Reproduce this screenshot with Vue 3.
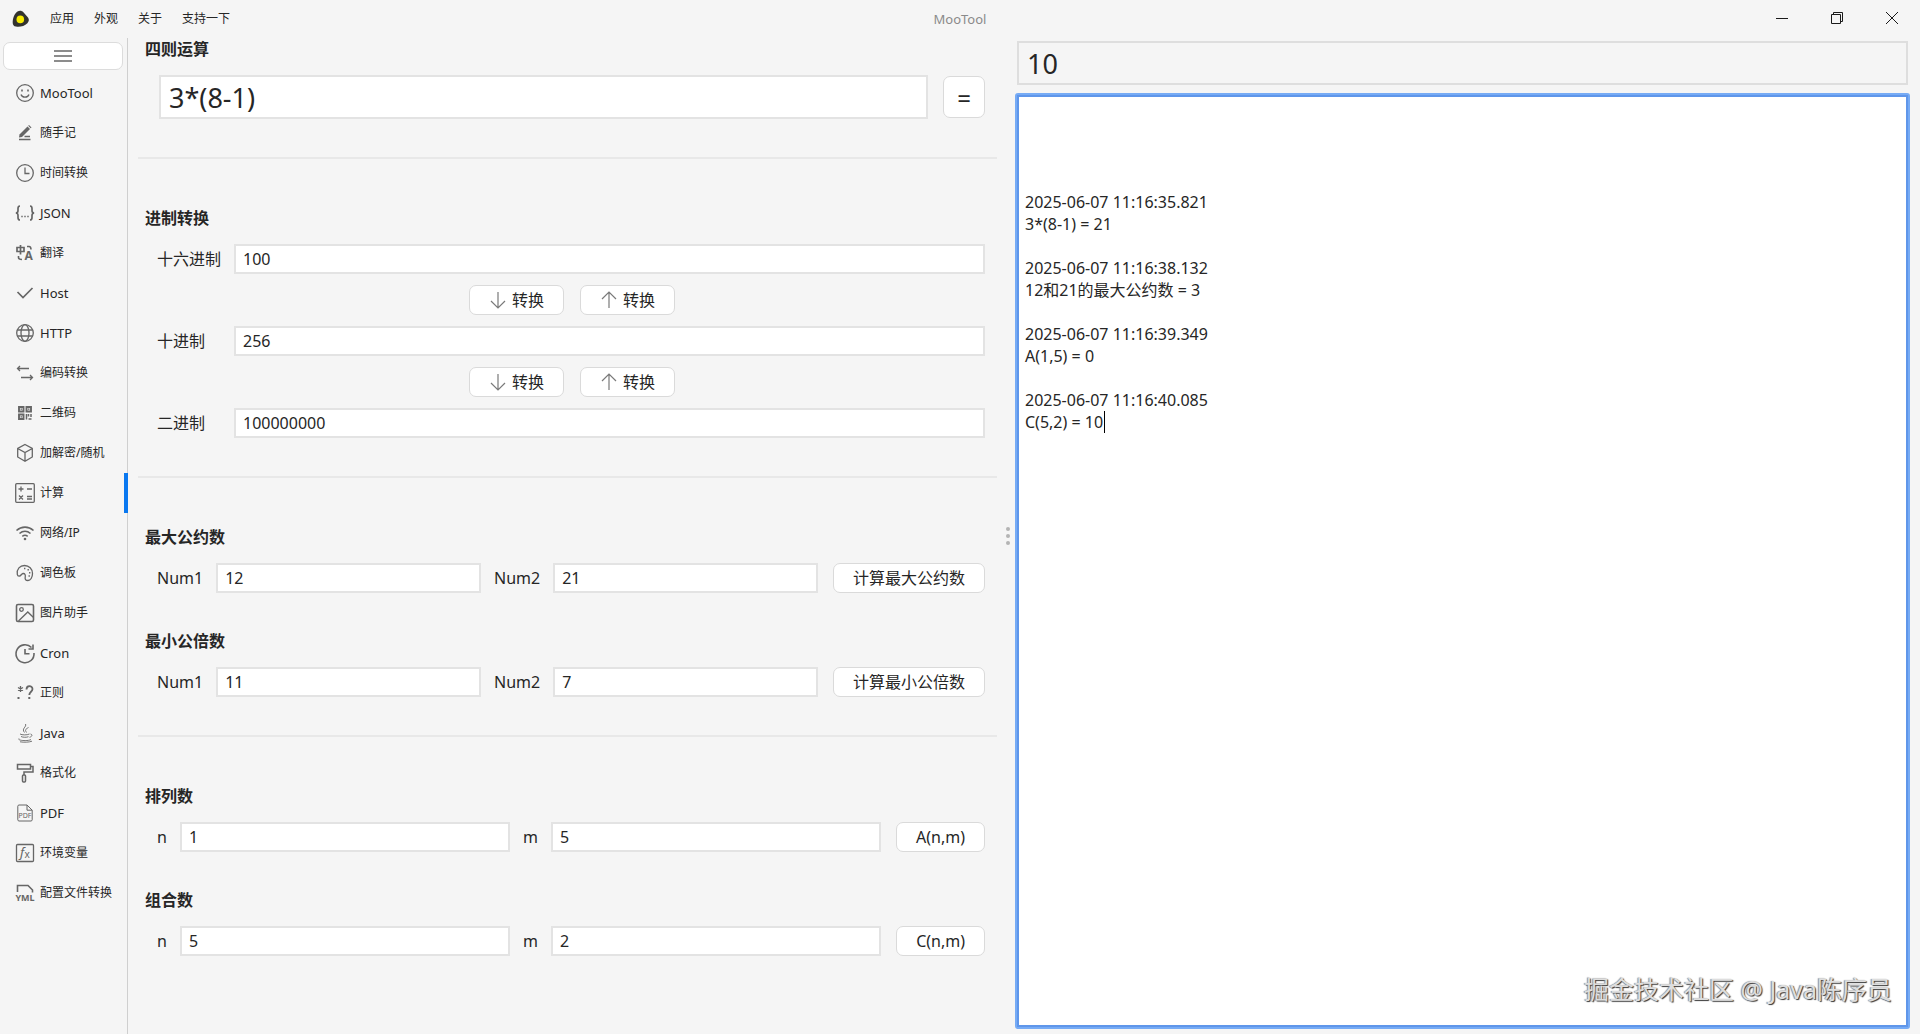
<template>
    <div class="app">
        <header class="titlebar">
            <nav class="menu">
                <svg class="logo" width="18" height="18" viewBox="0 0 18 18" aria-hidden="true">
                    <path d="M5.5 1.5C7.5.2 10 .6 11.400 2.200L16 7.600C17.400 9.400 17 11.600 15.400 13.200C12.500 16 8 17.300 4 16.600C1.800 16.200.6 14.600.7 12.400C.8 8.500 2 4 5.500 1.500Z" fill="#33332e" />
                    <circle cx="8.300" cy="9.400" r="3.800" fill="#f8ec00" />
                </svg>
                <button v-for="item in menus" :key="item" type="button" class="menu-item">{{ item }}</button>
            </nav>
            <span class="title">MooTool</span>
            <div class="window-actions">
                <button type="button" aria-label="最小化">
                    <svg width="12" height="12" viewBox="0 0 12 12"><path d="M0 6.500H12" /></svg>
                </button>
                <button type="button" aria-label="还原">
                    <svg width="12" height="12" viewBox="0 0 12 12"><path d="M.5 2.500H9.500V11.500H.5ZM2.500 2.500V.5H11.500V9.500H9.500" /></svg>
                </button>
                <button type="button" aria-label="关闭">
                    <svg width="12" height="12" viewBox="0 0 12 12"><path d="M0 0L12 12M12 0L0 12" /></svg>
                </button>
            </div>
        </header>

        <div class="body">
            <aside class="sidebar">
                <button type="button" class="collapse" aria-label="折叠">
                    <svg width="18" height="14" viewBox="0 0 18 14"><path d="M0 2H18M0 7H18M0 12H18" /></svg>
                </button>
                <button v-for="tool in tools" :key="tool.name" type="button" class="tool"
                    :class="{ 'active': tool.name === activeTool, 'latin': tool.latin }" @click="activeTool = tool.name">
                    <svg class="tool-icon" width="20" height="20" viewBox="0 0 20 20" aria-hidden="true" v-html="tool.icon"></svg>
                    <span>{{ tool.name }}</span>
                </button>
            </aside>

            <main class="workspace">
                <section class="form">
                    <div class="group">
                        <h2><label for="expression">四则运算</label></h2>
                        <div class="row wide">
                            <input id="expression" v-model="expression" class="large" type="text">
                            <button type="button" class="btn equals">=</button>
                        </div>
                    </div>

                    <hr>

                    <div class="group">
                        <h2>进制转换</h2>
                        <div class="radix">
                            <template v-for="(item, index) in radixes" :key="item.id">
                                <div v-if="index > 0" class="row wide convert">
                                    <button type="button" class="btn">
                                        <svg width="18" height="20" viewBox="1 0 18 20"><path d="M10 2V18M3 11L10 18L17 11" /></svg>
                                        转换
                                    </button>
                                    <button type="button" class="btn">
                                        <svg width="18" height="20" viewBox="1 0 18 20"><path d="M10 18V2M3 9L10 2L17 9" /></svg>
                                        转换
                                    </button>
                                </div>
                                <div class="row">
                                    <label class="radix-label" :for="item.id">{{ item.label }}</label>
                                    <input :id="item.id" v-model="item.value" type="text">
                                </div>
                            </template>
                        </div>
                    </div>

                    <template v-for="(section, index) in pairSections" :key="index">
                        <hr>
                        <div v-for="pair in section" :key="pair.id" class="group">
                            <h2>{{ pair.title }}</h2>
                            <div class="row">
                                <label :for="pair.id + '-a'">{{ pair.labels[0] }}</label>
                                <input :id="pair.id + '-a'" v-model="pair.a" type="text">
                                <label :for="pair.id + '-b'">{{ pair.labels[1] }}</label>
                                <input :id="pair.id + '-b'" v-model="pair.b" type="text">
                                <button type="button" class="btn">{{ pair.action }}</button>
                            </div>
                        </div>
                    </template>
                </section>

                <div class="splitter"><i></i><i></i><i></i></div>

                <section class="output">
                    <input class="large result" type="text" :value="result" readonly aria-label="计算结果">
                    <div class="console">
                        <textarea v-model="log" spellcheck="false" aria-label="计算记录"></textarea>
                        <span class="caret" :style="caretStyle"></span>
                        <span class="watermark">掘金技术社区 @ Java陈序员</span>
                    </div>
                </section>
            </main>
        </div>
    </div>
</template>

<script setup>
import { ref, computed } from 'vue';

const menus = ['应用', '外观', '关于', '支持一下'];

const tools = [
    { name: 'MooTool', latin: true, icon: '<circle cx="10" cy="10" r="8.300"/><path d="M6 11.500C7 15 13 15 14 11.500"/><path d="M7 6.500V8.500M13 6.500V8.500" stroke-width="1.600"/>' },
    { name: '随手记', icon: '<path d="M4.500 11.500L12.500 3.500L15 6L7 14L4 14.500Z" fill="currentColor" stroke="none"/><path d="M13.200 2.800L14 2L16.500 4.500L15.700 5.300Z" fill="currentColor" stroke="none"/><path d="M9.500 13.500H15M4 16.500H15.500" stroke-width="1.400"/>' },
    { name: '时间转换', icon: '<circle cx="10" cy="10" r="8.300"/><path d="M10 4.500V10.500H14.500"/>' },
    { name: 'JSON', latin: true, icon: '<path d="M5 3C3 3 3 4 3 5.500V7.500C3 9 2.500 10 .8 10C2.500 10 3 11 3 12.500V14.500C3 16 3 17 5 17M15 3C17 3 17 4 17 5.500V7.500C17 9 17.500 10 19.200 10C17.500 10 17 11 17 12.500V14.500C17 16 17 17 15 17" stroke-width="1.700"/><path d="M6.300 13.500H7.700M9.300 13.500H10.700M12.300 13.500H13.700"/>' },
    { name: '翻译', icon: '<path d="M2 4.500H9V8.500H2ZM5.500 2V11.500" stroke-width="1.700"/><path d="M12 3.500H14C15.500 3.500 16 4.500 16 6.500M3.500 13V14.500C3.500 16 4.500 16.500 7 16.500" stroke-width="1.600"/><text x="9.500" y="16.500" font-size="12" font-weight="700" fill="currentColor" stroke="none">A</text>' },
    { name: 'Host', latin: true, icon: '<path d="M2.500 9L8 14.500L17.500 5" stroke-width="1.700"/>' },
    { name: 'HTTP', latin: true, icon: '<circle cx="10" cy="10" r="8.300"/><ellipse cx="10" cy="10" rx="4" ry="8.300"/><path d="M2.300 7H17.700M2.300 13H17.700"/>' },
    { name: '编码转换', icon: '<path d="M14 5.500H2.500M5 3L2.500 5.500L5 8M6 14.500H17.500M15 12L17.500 14.500L15 17"/>' },
    { name: '二维码', icon: '<path d="M4 4H8.500V8.500H4ZM11.500 4H16V8.500H11.500ZM4 11.500H8.500V16H4Z" stroke-width="1.900"/><path d="M5.500 6.200H7M13 6.200H14.500M5.500 13.800H7" /><path d="M11.500 11V16.500M13.500 11V13.500M16 11V14M13.500 16H16.500" stroke-width="1.500"/>' },
    { name: '加解密/随机', icon: '<path d="M10 1.500L17.300 5.500V14L10 18.300L2.700 14V5.500ZM2.700 5.500L10 9.500L17.300 5.500M10 9.500V18"/>' },
    { name: '计算', icon: '<rect x=".7" y=".7" width="18.600" height="18.600" rx="1"/><path d="M3.500 6H8.500M6 3.500V8.500M12 6H17M4 12.500L8 16.500M8 12.500L4 16.500M12 13.500H17M12 16H17"/>' },
    { name: '网络/IP', icon: '<path d="M1.500 7.500C6.500 3 13.500 3 18.500 7.500M4.500 10.500C7.800 7.700 12.200 7.700 15.500 10.500M7.300 13.300C9 12 11 12 12.700 13.300" stroke-width="1.600"/><circle cx="10" cy="16" r="1.300" fill="currentColor" stroke="none"/>' },
    { name: '调色板', icon: '<path d="M2.300 11.300C1.500 6 5 2.500 9.500 2.500C14 2.500 17.500 6 17.500 10.500C17.500 14.500 15.500 17.500 13 17.500C10.500 17.500 9.800 16 10.200 14.200C10.700 12 10 10.300 8 10.500C6.500 10.700 6 13 4.300 13.200C3.200 13.300 2.500 12.500 2.300 11.300Z"/><path d="M9 5.500H10.400M12.500 6.700H13.900M14 9.800H15.400M13.500 13H14.900" stroke-width="1.500"/>' },
    { name: '图片助手', icon: '<rect x="1.500" y="1.500" width="17" height="17" rx="1.500" stroke-width="1.600"/><circle cx="6.500" cy="6.500" r="1.800"/><path d="M3.500 18L12.800 9L18.500 14.500"/>' },
    { name: 'Cron', latin: true, icon: '<path d="M16.500 4.500A9 9 0 1 0 19 10" stroke-width="1.600"/><path d="M18 1.500V6H13.500M10 6V10.800H14.500" stroke-width="1.600"/>' },
    { name: '正则', icon: '<path d="M5.500 3V9M3 4.500L8 7.500M8 4.500L3 7.500"/><path d="M11.500 6.500C11.500 1.800 17.500 2.200 17.500 6C17.500 8.800 14.300 8.700 14.300 12" stroke-width="1.800"/><path d="M2.500 15H4.500M13.300 15H15.300" stroke-width="2"/>' },
    { name: 'Java', latin: true, icon: '<path d="M10.500 1C12 4 6 5.500 9.500 9.500M13.500 4.500C10 6.500 10 7 11.500 9.500M5 11C7 12.200 12 12.200 14.500 11M15.500 11C18 11.500 17 13.800 14.500 14.300M6 13.500C8 14.500 11.500 14.500 13.500 13.700M4 15.500C1.500 17.500 13 18.500 16 16.500M5 18.800C9 19.500 14 19.300 17 18.200" stroke-width=".9"/>' },
    { name: '格式化', icon: '<path d="M2.500 1.500H15.500V6H2.500ZM15.500 3.500H18V9H9V12" stroke-width="1.500"/><rect x="7.500" y="12" width="3" height="7" rx="1" stroke-width="1.500"/>' },
    { name: 'PDF', latin: true, icon: '<path d="M12 2H4C3.300 2 2.800 2.500 2.800 3.200V16.800C2.800 17.500 3.300 18 4 18H16C16.700 18 17.200 17.500 17.200 16.800V7.200L12 2V7.200H17.200" stroke-width="1"/><text x="10" y="14.500" text-anchor="middle" font-size="7" fill="currentColor" stroke="none">PDF</text>' },
    { name: '环境变量', icon: '<rect x="1.500" y="1.500" width="17" height="17" rx="1"/><text x="5" y="14" font-size="13" font-style="italic" fill="currentColor" stroke="none">f</text><text x="9.500" y="14.500" font-size="10" fill="currentColor" stroke="none">x</text>' },
    { name: '配置文件转换', icon: '<path d="M2.500 9V2.500H13L17.500 7V9.500" stroke-width="1.600"/><text x="10" y="17.500" text-anchor="middle" font-size="9" font-weight="700" fill="currentColor" stroke="none">YML</text>' }
];

const activeTool = ref('计算');
const expression = ref('3*(8-1)');
const result = ref('10');

const radixes = ref([
    { id: 'hex', label: '十六进制', value: '100' },
    { id: 'dec', label: '十进制', value: '256' },
    { id: 'bin', label: '二进制', value: '100000000' }
]);

const pairSections = ref([
    [
        { id: 'gcd', title: '最大公约数', labels: ['Num1', 'Num2'], a: '12', b: '21', action: '计算最大公约数' },
        { id: 'lcm', title: '最小公倍数', labels: ['Num1', 'Num2'], a: '11', b: '7', action: '计算最小公倍数' }
    ],
    [
        { id: 'perm', title: '排列数', labels: ['n', 'm'], a: '1', b: '5', action: 'A(n,m)' },
        { id: 'comb', title: '组合数', labels: ['n', 'm'], a: '5', b: '2', action: 'C(n,m)' }
    ]
]);

const log = ref([
    '', '', '', '',
    '2025-06-07 11:16:35.821',
    '3*(8-1) = 21',
    '',
    '2025-06-07 11:16:38.132',
    '12和21的最大公约数 = 3',
    '',
    '2025-06-07 11:16:39.349',
    'A(1,5) = 0',
    '',
    '2025-06-07 11:16:40.085',
    'C(5,2) = 10'
].join('\n'));

const ctx = document.createElement('canvas').getContext('2d');
ctx.font = '16px "Noto Sans", "Noto Sans CJK SC", sans-serif';

// caret sits behind the last character of the log
const caretStyle = computed(() => {
    const lines = log.value.split('\n');
    const width = Math.ceil(ctx.measureText(lines[lines.length - 1]).width);
    return {
        left: `${8 + width}px`,
        top: `${8 + (lines.length - 1) * 22}px`
    };
});
</script>

<style>
body {
    margin: 0;
    background: #f5f5f5;
}
</style>

<style scoped>
* {
    box-sizing: border-box;
}

.app {
    display: flex;
    flex-direction: column;
    min-height: 100vh;
    background: #f5f5f5;
    color: #262626;
    font: 16px/22px "Noto Sans", "Noto Sans CJK SC", sans-serif;
}

button,
input,
textarea {
    font: inherit;
    color: inherit;
    outline: none;
}

button {
    border: 0;
    padding: 0;
    background: none;
}

svg {
    flex: none;
    overflow: visible;
    fill: none;
    stroke: currentColor;
}

/* title bar */
.titlebar {
    display: grid;
    grid-template-columns: 1fr auto 1fr;
    align-items: center;
    height: 38px;
    font-size: 12px;
}

.menu {
    display: flex;
    align-items: center;
    gap: 20px;
    padding-left: 12px;
}

.logo {
    stroke: none;
}

.title {
    color: #8a8a8a;
    font-size: 13px;
}

.window-actions {
    display: flex;
    justify-content: flex-end;
    align-self: start;
    padding-right: 1px;
}

.window-actions button {
    display: flex;
    align-items: center;
    justify-content: center;
    width: 55px;
    height: 36px;
    color: #1a1a1a;
}

/* sidebar */
.body {
    display: flex;
    flex: 1;
}

.sidebar {
    display: flex;
    flex-direction: column;
    flex: none;
    width: 128px;
    padding-top: 4px;
    border-right: 1px solid #cfcfcf;
}

.collapse {
    display: flex;
    align-items: center;
    justify-content: center;
    height: 28px;
    margin: 0 4px 3px 3px;
    border: 1px solid #dcdcdc;
    border-radius: 7px;
    background: #fff;
    color: #8c8c8c;
}

.collapse svg {
    stroke-width: 2;
}

.tool {
    display: flex;
    align-items: center;
    gap: 5px;
    height: 40px;
    margin-right: -1px;
    padding-left: 15px;
    border-right: 4px solid transparent;
    font-size: 12px;
    white-space: nowrap;
}

.tool.latin {
    font-size: 13px;
}

.tool.active {
    border-right-color: #0a78f0;
}

.tool-icon {
    color: #666;
    stroke-width: 1.3;
}

/* workspace */
.workspace {
    display: grid;
    grid-template-columns: 873fr 14px 905fr;
    flex: 1;
}

.form {
    padding: 0 4px 0 10px;
}

.group {
    padding: 0 12px 0 7px;
}

.group + .group {
    margin-top: 37px;
}

h2 {
    margin: 0 0 15px;
    font-size: 16px;
    font-weight: 700;
    line-height: 22px;
}

hr {
    height: 2px;
    margin: 38px 0 48px;
    border: 0;
    background: #e8e8e8;
}

.row {
    display: flex;
    align-items: center;
    padding-left: 12px;
}

.row.wide {
    padding-left: 14px;
}

.row label {
    flex: none;
    margin-right: 13px;
}

.row input + label {
    margin-left: 13px;
}

.row .radix-label {
    width: 64px;
}

input {
    flex: 1;
    min-width: 0;
    height: 30px;
    padding: 0 7px;
    border: 2px solid #e3e3e3;
    border-radius: 0;
    background: #fff;
}

.large {
    height: 44px;
    padding: 0 8px;
    font-size: 27px;
}

.btn {
    display: flex;
    align-items: center;
    justify-content: center;
    gap: 5px;
    height: 30px;
    padding: 0 19px;
    border: 1px solid #dadada;
    border-radius: 7px;
    background: #fff;
}

.btn svg {
    color: #7a7a7a;
    stroke-width: 1.2;
}

.row input + .btn {
    margin-left: 15px;
}

.btn.equals {
    width: 42px;
    height: 42px;
    padding: 2px 0 0;
    font-size: 24px;
}

.radix {
    display: flex;
    flex-direction: column;
    gap: 11px;
}

.convert {
    justify-content: center;
    gap: 16px;
}

.splitter {
    display: flex;
    flex-direction: column;
    align-items: center;
    justify-content: center;
    gap: 3px;
}

.splitter i {
    width: 4px;
    height: 4px;
    border-radius: 50%;
    background: #b4b4b4;
}

/* output */
.output {
    display: flex;
    flex-direction: column;
    gap: 8px;
    padding: 3px 10px 5px 0;
}

.result {
    flex: none;
    margin: 0 2px;
    border-color: #dedede;
    background: #f5f5f5;
}

.console {
    position: relative;
    display: flex;
    flex: 1;
    border: 2px solid #76abf5;
    border-radius: 3px;
}

textarea {
    flex: 1;
    padding: 6px;
    border: 2px solid #5f96ea;
    background: #fff;
    resize: none;
}

.caret {
    position: absolute;
    width: 1px;
    height: 22px;
    background: #000;
}

.watermark {
    position: absolute;
    right: 16px;
    bottom: 20px;
    color: #dedede;
    font-size: 25px;
    line-height: 36px;
    text-shadow: -1px 0 1px #888, 1px 1px 1px #333;
    pointer-events: none;
}
</style>
